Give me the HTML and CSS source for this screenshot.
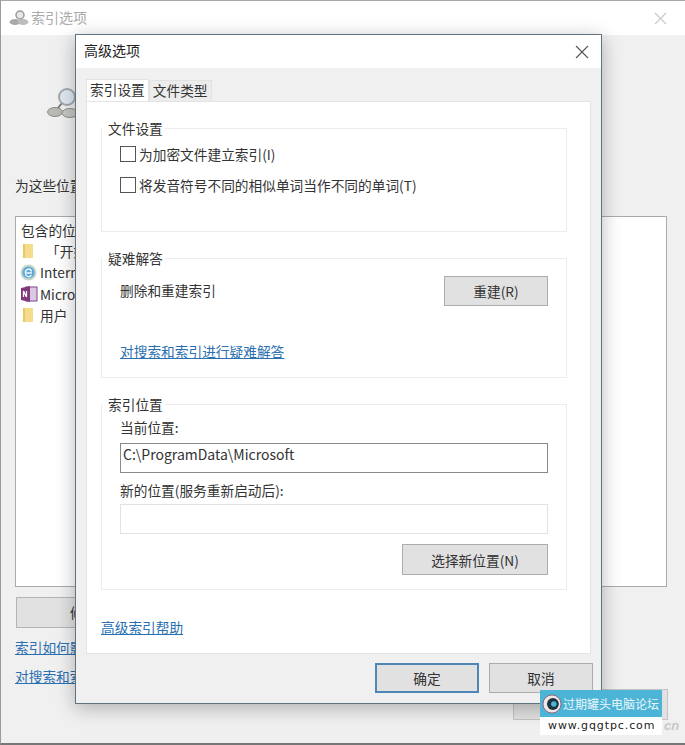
FILE: index.html
```html
<!DOCTYPE html>
<html lang="zh">
<head>
<meta charset="utf-8">
<title>索引选项</title>
<link rel="stylesheet" href="styles.css">
</head>
<body>
<div class="desktop">
  <section class="back-window">
    <header class="back-title">
      <svg class="back-title-icon" width="20" height="18" viewBox="0 0 20 18"><ellipse cx="6" cy="13" rx="5.500" ry="3" fill="#a9a9a9"/><ellipse cx="14" cy="13" rx="5.500" ry="3" fill="#bdbdbd"/><circle cx="11" cy="6" r="4" fill="#e4e8ea" stroke="#9a9a9a" stroke-width="1.500"/></svg>
      <span>索引选项</span>
      <svg class="back-close" width="13" height="13" viewBox="0 0 13 13"><path d="M1 1l11 11M12 1L1 12" stroke="#c9c9c9" stroke-width="1.200" fill="none"/></svg>
    </header>
    <div class="back-body">
      <div class="back-icon-row">
        <svg width="32" height="32" viewBox="0 0 32 32"><ellipse cx="8" cy="24" rx="7.500" ry="4.500" fill="#b8b8b4" stroke="#8c8c88"/><ellipse cx="23" cy="25" rx="8" ry="4.500" fill="#c6c6c2" stroke="#8c8c88"/><path d="M11 20l4-5" stroke="#777" stroke-width="2"/><circle cx="20" cy="9" r="8" fill="#dfe9f2" stroke="#a2a8ad" stroke-width="2"/></svg>
      </div>
      <p class="back-label">为这些位置建立索引</p>
      <div class="back-list">
        <div class="list-head">包含的位置</div>
        <div class="list-row"><span class="folder"></span><span class="indent">「开始」菜单</span></div>
        <div class="list-row"><svg width="17" height="17" viewBox="0 0 17 17"><circle cx="8.500" cy="8.500" r="7" fill="#58a8d8" stroke="#c8d8c8" stroke-width="2"/><path d="M5 9h7M5.500 9a3 3 0 0 1 6-1.500M11.500 11a3.200 3.200 0 0 1-6-1" stroke="#eef6fa" stroke-width="1.500" fill="none"/></svg><span>Internet Explorer</span></div>
        <div class="list-row tight"><svg width="18" height="18" viewBox="0 0 18 18"><rect x="6" y="2" width="11" height="14" fill="#ddc8e4" stroke="#7b4a90"/><path d="M1 3l9-2v16l-9-2z" fill="#80397b"/><path d="M3.500 12V6l3 6V6" stroke="#fff" stroke-width="1.300" fill="none"/></svg><span>Microsoft OneNote</span></div>
        <div class="list-row"><span class="folder"></span><span>用户</span></div>
      </div>
      <div class="back-btn"><span class="back-btn-text">修改(M)</span></div>
      <a class="link back-link">索引如何影响搜索?</a>
      <a class="link back-link second">对搜索和索引进行疑难解答</a>
    </div>
    <div class="back-close-btn"></div>
  </section>

  <section class="dialog">
    <header class="dialog-title">
      <span>高级选项</span>
      <svg width="14" height="14" viewBox="0 0 14 14"><path d="M1 1l12 12M13 1L1 13" stroke="#555" stroke-width="1.100" fill="none"/></svg>
    </header>
    <div class="dialog-main">
      <div class="tabs">
        <div class="tab active">索引设置</div>
        <div class="tab">文件类型</div>
      </div>
      <div class="panel">
        <fieldset class="group group-file">
          <legend>文件设置</legend>
          <label class="check"><span class="box"></span>为加密文件建立索引(I)</label>
          <label class="check"><span class="box"></span>将发音符号不同的相似单词当作不同的单词(T)</label>
        </fieldset>
        <fieldset class="group group-trouble">
          <legend>疑难解答</legend>
          <div class="rebuild-row">
            <span>删除和重建索引</span>
            <button class="btn rebuild">重建(R)</button>
          </div>
          <a class="link trouble-link">对搜索和索引进行疑难解答</a>
        </fieldset>
        <fieldset class="group group-location">
          <legend>索引位置</legend>
          <div class="field-label">当前位置:</div>
          <div class="input">C:\ProgramData\Microsoft</div>
          <div class="field-label second">新的位置(服务重新启动后):</div>
          <div class="input empty"></div>
          <div class="location-actions"><button class="btn choose">选择新位置(N)</button></div>
        </fieldset>
        <a class="link help-link">高级索引帮助</a>
      </div>
      <footer class="dialog-actions">
        <button class="btn action primary">确定</button>
        <button class="btn action">取消</button>
      </footer>
    </div>
  </section>

  <aside class="watermark">
    <div class="wm-top">
      <svg width="20" height="24" viewBox="0 0 22 24"><circle cx="11" cy="12" r="10" fill="#efe6ea" stroke="#8a5a70" stroke-width="1"/><circle cx="12" cy="12" r="6.500" fill="#1d3440"/><circle cx="13" cy="12" r="3" fill="#4bb8d8"/></svg>
      <span>过期罐头电脑论坛</span>
    </div>
    <div class="wm-bottom">www.gqgtpc.com</div>
  </aside>
  <span class="wm-mark">cn</span>
</div>
</body>
</html>
```
FILE: styles.css
```css
* { box-sizing: border-box; }
html, body { margin: 0; padding: 0; }
body {
  width: 685px;
  height: 745px;
  overflow: hidden;
  background: #f0f0f0;
  font-family: "Noto Sans CJK SC", "Open Sans", sans-serif;
  font-size: 13.7px;
  color: #333;
}
.desktop { position: relative; width: 685px; height: 745px; overflow: hidden; }

.back-window {
  width: 685px;
  height: 745px;
  background: #f0f0f0;
  border-top: 1px solid #a8a8a8;
  border-left: 1px solid #9a9a9a;
  border-bottom: 2px solid #777;
}
.back-title {
  height: 34px;
  background: #fff;
  display: flex;
  align-items: center;
  padding: 0 18px 0 8px;
  gap: 2px;
  color: #aaa;
  font-size: 14px;
  line-height: 30px;
}
.back-title span { margin-top: -3px; }
.back-title-icon { flex: none; }
.back-close { margin-left: auto; }
.back-body { padding: 53px 0 0 14px; height: 708px; }
.back-icon-row { height: 86px; padding-left: 32px; }
.back-label { margin: 0; height: 22px; line-height: 22px; color: #333; }
.back-list {
  margin-top: 20px;
  width: 652px;
  height: 371px;
  background: #fff;
  border: 1px solid #aaa;
  padding: 2px 5px;
  color: #333;
}
.list-head { height: 21px; line-height: 22px; }
.list-row { display: flex; align-items: center; height: 21.5px; gap: 3px; white-space: nowrap; margin-left: -1px; }
.list-row.tight { gap: 2px; }
.folder { width: 10px; height: 14px; margin: 0 4px 0 3px; background: #f4dc8c; border-left: 2px solid #e8c860; flex: none; }
.indent { margin-left: 6px; }
.back-btn {
  margin-top: 10px;
  margin-left: 1px;
  width: 200px;
  height: 31px;
  background: #e1e1e1;
  border: 1px solid #b4b4b4;
  padding-left: 53px;
  line-height: 29px;
}
.back-link { display: block; margin-top: 9px; }
.back-close-btn {
  position: absolute;
  left: 513px;
  top: 689px;
  width: 155px;
  height: 31px;
  background: #e1e1e1;
  border: 1px solid #c4c4c4;
}

.link { color: #2a6fb0; text-decoration: underline; line-height: 20px; }

.dialog {
  position: absolute;
  left: 75px;
  top: 34px;
  width: 527px;
  height: 670px;
  background: #f0f0f0;
  border: 1px solid #5f7480;
  box-shadow: 0 4px 18px rgba(0, 0, 0, .28);
}
.dialog-title {
  height: 33px;
  background: #fff;
  display: flex;
  align-items: center;
  justify-content: space-between;
  padding: 0 12px 0 8px;
  font-size: 14px;
  color: #222;
}
.dialog-title span { margin-top: -3px; }
.dialog-main { padding: 11px 10px 0; }
.tabs { display: flex; height: 22px; align-items: flex-end; }
.tab {
  height: 21px;
  padding: 0 3px;
  line-height: 19px;
  background: #ececec;
  border: 1px solid #e2e2e2;
  border-bottom: 0;
  color: #333;
}
.tab.active { height: 22px; background: #fff; }
.panel {
  height: 553px;
  background: #fff;
  border: 1px solid #e4e4e4;
  padding: 27px 23px 0 14px;
}
.group {
  margin: 0;
  padding: 0;
  border: 1px solid #ececec;
  min-width: 0;
}
.group legend {
  padding: 0 2px 0 6px;
  margin-left: -18px;
  line-height: 18px;
  color: #333;
}
.group-file { height: 113px; margin-top: -10px; padding: 0 0 0 18px; }
.check { display: flex; align-items: center; gap: 3px; height: 20px; margin-top: 7px; color: #333; }
.check + .check { margin-top: 11px; }
.box { width: 16px; height: 16px; background: #fff; border: 1px solid #555; flex: none; }
.group-trouble { height: 129px; margin-top: 17px; padding: 0 18px 0 18px; }
.rebuild-row { display: flex; justify-content: space-between; align-items: center; margin-top: 7px; height: 31px; }
.btn {
  font-family: inherit;
  font-size: 13.7px;
  color: #333;
  background: #e1e1e1;
  border: 1px solid #adadad;
  padding: 0;
}
.rebuild { width: 104px; height: 30px; margin-top: 2px; }
.trouble-link { display: block; margin-top: 36px; }
.group-location { height: 195px; margin-top: 17px; padding: 0 18px 0 18px; }
.field-label { height: 18px; line-height: 18px; margin-top: 5px; }
.field-label.second { margin-top: 8px; }
.input {
  margin-top: 7px;
  height: 30px;
  background: #fff;
  border: 1px solid #8a8a8a;
  font-size: 14px;
  line-height: 20px;
  padding-left: 2px;
}
.input.empty { border-color: #e2e2e2; margin-top: 5px; }
.location-actions { display: flex; justify-content: flex-end; margin-top: 10px; }
.choose { width: 146px; height: 31px; }
.help-link { display: inline-block; margin-top: 27px; }
.dialog-actions { display: flex; justify-content: flex-end; gap: 10px; margin-top: 9px; margin-right: -2px; }
.action { width: 104px; height: 30px; }
.primary { border: 2px solid #4f86b8; }

.watermark { position: absolute; left: 540px; top: 690px; width: 122px; }
.wm-top {
  height: 27px;
  background: #4cb4d6;
  color: #eaf7fb;
  font-size: 12px;
  display: flex;
  align-items: center;
  gap: 1px;
  white-space: nowrap;
  padding-left: 2px;
}
.wm-bottom {
  height: 18px;
  background: #fff;
  color: #222;
  font-family: "DejaVu Sans", sans-serif;
  font-size: 11px;
  letter-spacing: .9px;
  line-height: 18px;
  padding-left: 8px;
  white-space: nowrap;
}
.wm-mark {
  position: absolute;
  left: 664px;
  top: 718px;
  color: #c8c8c8;
  font-family: "Liberation Sans", sans-serif;
  font-size: 13px;
  font-weight: bold;
  font-style: italic;
}
```
